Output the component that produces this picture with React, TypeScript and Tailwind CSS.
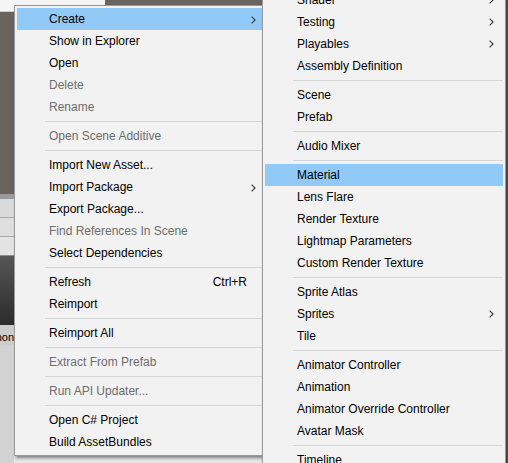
import clsx from "clsx";

type Entry = {
  label?: string;
  disabled?: boolean;
  sub?: boolean;
  shortcut?: string;
  active?: boolean;
  sep?: boolean;
};

const SEP: Entry = { sep: true };

const mainItems: Entry[] = [
  { label: "Create", sub: true, active: true },
  { label: "Show in Explorer" },
  { label: "Open" },
  { label: "Delete", disabled: true },
  { label: "Rename", disabled: true },
  SEP,
  { label: "Open Scene Additive", disabled: true },
  SEP,
  { label: "Import New Asset..." },
  { label: "Import Package", sub: true },
  { label: "Export Package..." },
  { label: "Find References In Scene", disabled: true },
  { label: "Select Dependencies" },
  SEP,
  { label: "Refresh", shortcut: "Ctrl+R" },
  { label: "Reimport" },
  SEP,
  { label: "Reimport All" },
  SEP,
  { label: "Extract From Prefab", disabled: true },
  SEP,
  { label: "Run API Updater...", disabled: true },
  SEP,
  { label: "Open C# Project" },
  { label: "Build AssetBundles" },
];

const createItems: Entry[] = [
  { label: "Shader", sub: true },
  { label: "Testing", sub: true },
  { label: "Playables", sub: true },
  { label: "Assembly Definition" },
  SEP,
  { label: "Scene" },
  { label: "Prefab" },
  SEP,
  { label: "Audio Mixer" },
  SEP,
  { label: "Material", active: true },
  { label: "Lens Flare" },
  { label: "Render Texture" },
  { label: "Lightmap Parameters" },
  { label: "Custom Render Texture" },
  SEP,
  { label: "Sprite Atlas" },
  { label: "Sprites", sub: true },
  { label: "Tile" },
  SEP,
  { label: "Animator Controller" },
  { label: "Animation" },
  { label: "Animator Override Controller" },
  { label: "Avatar Mask" },
  SEP,
  { label: "Timeline" },
];

function Chevron() {
  return (
    <svg width="5" height="8" viewBox="0 0 5 8" className="shrink-0">
      <path d="M0.6 0.6 L4.1 4 L0.6 7.4" fill="none" stroke="#3a3a3a" strokeWidth="1.1" />
    </svg>
  );
}

function MenuRow({ e, low }: { e: Entry; low?: boolean }) {
  if (e.sep) {
    return (
      <div className="h-[7px] pl-[28px] pt-[3px]">
        <div className="h-px bg-[#d7d7d7]" />
      </div>
    );
  }
  return (
    <div
      className={clsx(
        "flex h-[22px] items-center pl-[32px]",
        low && "pt-[1px]",
        e.active && "bg-[#91c9f7]",
        e.disabled ? "text-[#6d6d6d]" : "text-black"
      )}
    >
      <span className="flex-1 whitespace-nowrap leading-[21px]">{e.label}</span>
      {e.shortcut && <span className="pr-[18px] leading-[21px]">{e.shortcut}</span>}
      {e.sub && (
        <span className="flex pr-[9px]">
          <Chevron />
        </span>
      )}
    </div>
  );
}

export default function App() {
  return (
    <div
      className="relative flex h-[463px] w-[508px] overflow-hidden bg-[#e6e6e6] text-[12px]"
      style={{ fontFamily: '"Segoe UI", "Liberation Sans", Arial, sans-serif' }}
    >
      {/* editor behind, left strip */}
      <div className="flex w-[14px] flex-col">
        <div className="h-[12px] border-b border-[#cfcfcf] bg-[#f5f5f5]" />
        <div className="h-[182px] bg-[#6b635d]" />
        <div className="h-[5px] bg-[#9a9a9a]" />
        <div className="h-[19px] border-b border-[#a9a9a9] bg-[#dadada]" />
        <div className="h-[19px] border-b border-[#a9a9a9] bg-[#dedede]" />
        <div className="h-[19px] border-b border-[#8a8a8a] bg-[#e3e3e3]" />
        <div className="h-[69px] bg-gradient-to-b from-[#565656] to-[#2c2c2c]" />
        <div className="flex h-[20px] items-end justify-end overflow-hidden bg-[#cdcdcd] pb-[2px]">
          <span className="shrink-0 whitespace-nowrap text-[11px] leading-none text-black">Python</span>
        </div>
        <div className="flex-1 bg-[#d2d2d2]" />
      </div>

      <div className="flex flex-1 flex-col">
        <div className="flex h-[5px]">
          <div className="w-[91px] bg-[#f5f5f5]" />
          <div className="flex-1 bg-[#6b635d]" />
        </div>
        <div className="flex flex-1">
          <div className="flex-1" />
          <div className="w-[2px] bg-[#6a6a6a]" />
        </div>
      </div>

      {/* project context menu */}
      <div className="absolute left-[14px] top-[5px] z-10 w-[254px] border border-[#999999] bg-[#f2f2f2] p-[2px] shadow-[2px_2px_3px_rgba(0,0,0,0.45)]">
        {mainItems.map((e, i) => (
          <MenuRow key={i} e={e} low />
        ))}
      </div>

      {/* Create submenu */}
      <div className="absolute left-[262px] top-[-14px] z-20 w-[244px] border border-[#999999] bg-[#f2f2f2] p-[2px] shadow-[2px_2px_3px_rgba(0,0,0,0.45)]">
        {createItems.map((e, i) => (
          <MenuRow key={i} e={e} />
        ))}
      </div>
    </div>
  );
}
